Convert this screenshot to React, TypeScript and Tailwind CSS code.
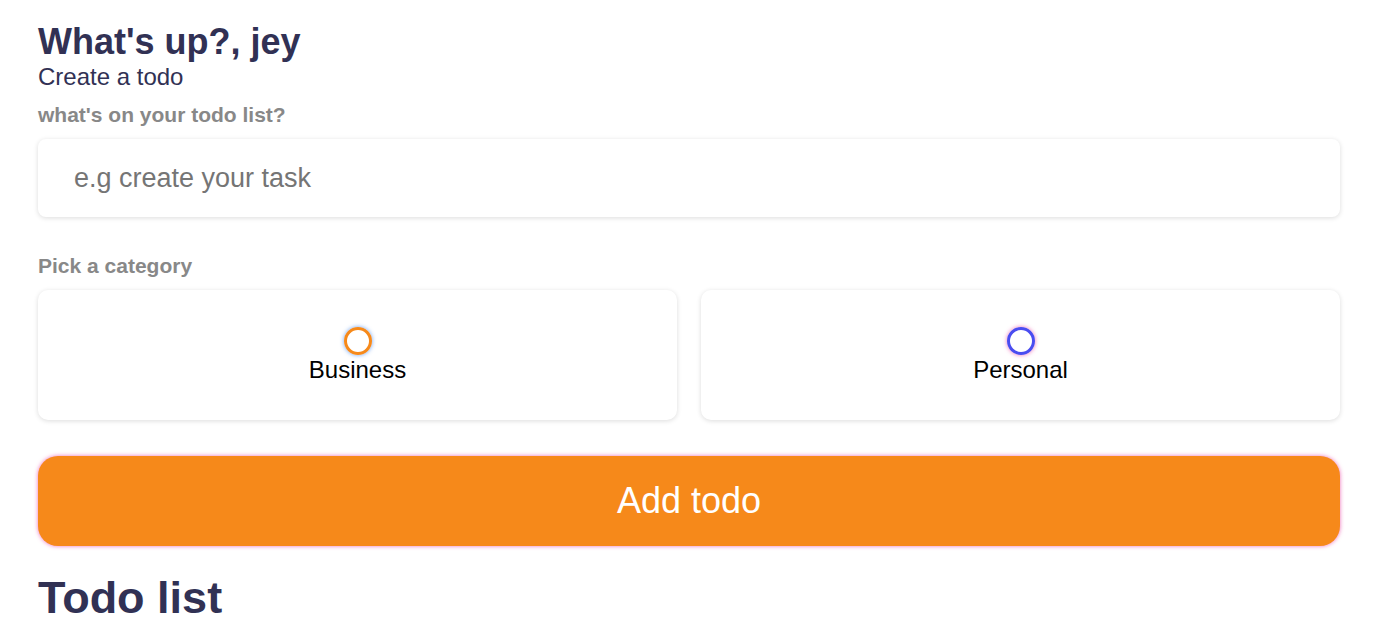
import React from "react";

export default function App() {
  const font = { fontFamily: '"Liberation Sans", Arial, sans-serif' };
  return (
    <div className="min-h-screen bg-white" style={font}>
      <main className="pl-[38px] pr-[36px] pt-[21px]">
        <h3 className="text-[36px] leading-[41px] font-bold text-[#313154]">What's up?, jey</h3>
        <h4 className="text-[24px] leading-[29px] text-[#313154]">Create a todo</h4>
        <p className="mt-[12px] text-[21px] leading-[24px] font-bold text-[#888888]">what's on your todo list?</p>
        <input
          type="text"
          placeholder="e.g create your task"
          className="mt-[12px] block w-full h-[78px] rounded-[8px] bg-white pl-[36px] text-[27px] text-[#313154] placeholder:text-[#757575] shadow-[0_1px_5px_rgba(0,0,0,0.14)] outline-none"
        />
        <p className="mt-[37px] text-[21px] leading-[24px] font-bold text-[#888888]">Pick a category</p>
        <div className="mt-[12px] grid grid-cols-2 gap-[24px]">
          <label className="flex h-[130px] flex-col items-center justify-center rounded-[10px] bg-white pt-[1px] shadow-[0_1px_5px_rgba(0,0,0,0.14)]">
            <span className="block h-[28px] w-[28px] rounded-full border-[3px] border-[#f6891a] shadow-[0_0_4px_rgba(58,130,238,0.75)]" />
            <span className="mt-[1px] text-[24px] leading-[28px] text-black">Business</span>
          </label>
          <label className="flex h-[130px] flex-col items-center justify-center rounded-[10px] bg-white pt-[1px] shadow-[0_1px_5px_rgba(0,0,0,0.14)]">
            <span className="block h-[28px] w-[28px] rounded-full border-[3px] border-[#4a4cf0] shadow-[0_0_4px_rgba(234,64,164,0.75)]" />
            <span className="mt-[1px] text-[24px] leading-[28px] text-black">Personal</span>
          </label>
        </div>
        <button className="mt-[36px] block h-[90px] w-full rounded-[20px] bg-[#f6891a] text-[36px] text-white shadow-[0_0_4px_rgba(234,64,164,0.75)]">
          Add todo
        </button>
        <h3 className="mt-[27px] text-[45px] leading-[50px] font-bold text-[#313154]">Todo list</h3>
      </main>
    </div>
  );
}
